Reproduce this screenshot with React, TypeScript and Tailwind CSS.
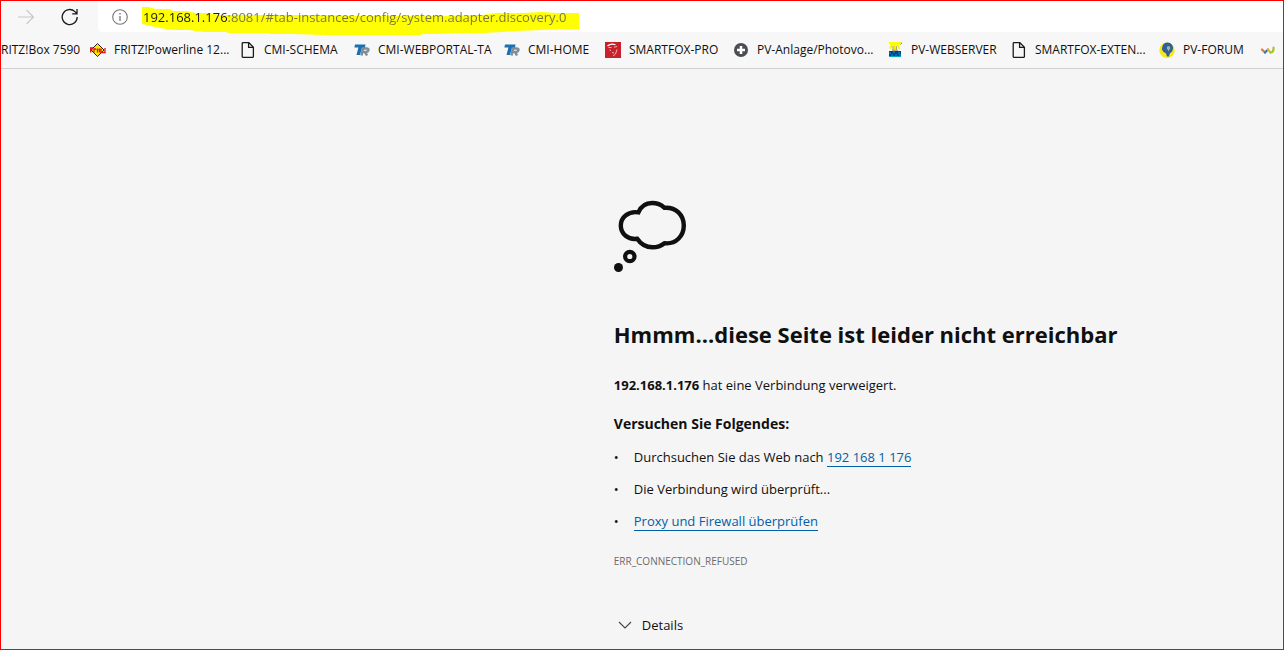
import type { ReactNode } from 'react';

function FritzIcon() {
  return (
    <svg width="16" height="16" viewBox="0 0 16 16">
      <path d="M7.500 1.500 14 8 7.500 14.500 1 8Z" fill="#ffe600" stroke="#222" strokeWidth="1" />
      <path d="M0 6h3M.700 6v4.500M0 8h2.500M4 10.500V7h2M7.500 6.500v4M6.500 7.500h2M9.500 6.500v4M11 6.500v4h1.500M15 6v4.500h-2.500" fill="none" stroke="#d8141c" strokeWidth="1.300" />
    </svg>
  );
}

function PageIcon() {
  return (
    <svg width="16" height="16" viewBox="0 0 16 16" fill="none" stroke="#1b1b1b" strokeWidth="1.300">
      <path d="M3.200.600h5.600l4.600 4.600v9.200q0 1-1 1H3.200q-1 0-1-1V1.600q0-1 1-1ZM8.600.600v4.800h4.800" />
    </svg>
  );
}

function TrIcon() {
  return (
    <svg width="16" height="16" viewBox="0 0 16 16">
      <path d="M7.500 13.500 9 6.500h3.500q2.300 0 1.900 1.700t-2.400 1.800H8.500M11 10l2 3.500" fill="none" stroke="#7f8d99" strokeWidth="2.500" />
      <path d="M1 2.500h10.500L11 5.500H8L6 13H2.500l1.900-7.500H.400Z" fill="#1b6fb5" />
    </svg>
  );
}

function FoxIcon() {
  return (
    <svg width="16" height="16" viewBox="0 0 16 16" fill="none">
      <path d="M0 0h16v16H0Z" fill="#c9202b" />
      <path d="M2.500 4Q6 .800 10.500 2.800" stroke="#fff" strokeWidth="1.200" />
      <path d="M3.500 5.500h3M9 5.200l3-.700M4.500 8l1.500.500M12 7.500 10.500 12 8 14M7 10.500l2 .500" stroke="#efb3b3" strokeWidth="1" />
    </svg>
  );
}

function PlusIcon() {
  return (
    <svg width="16" height="16" viewBox="0 0 16 16">
      <circle cx="8" cy="8" r="7" fill="#4a4e52" />
      <path d="M8 4v8M4 8h8" stroke="#fff" strokeWidth="2.600" />
    </svg>
  );
}

function SolarIcon() {
  return (
    <svg width="16" height="16" viewBox="0 0 16 16" fill="none">
      <path d="M1 0h12.500L11 3.500H4Z" fill="#ffff00" />
      <path d="M5 3 3 6.500M7.500 3v5.500M10.500 3l2 4M12.500 2l2.500-1.800" stroke="#f4ef00" strokeWidth="1.600" />
      <path d="M6 4v4M9.300 4v4M5 8.300h6M13.500 2.500 15 1" stroke="#77771a" strokeWidth=".700" />
      <path d="M2 9h12v6H2Z" fill="#063d94" />
      <path d="M2 11h2M6 10h2M11 11h2M4 13h2M8 13h2M12 13h2M2 14.500h12" stroke="#00a8b8" strokeWidth="1" />
    </svg>
  );
}

function ForumIcon() {
  return (
    <svg width="16" height="16" viewBox="0 0 16 16">
      <circle cx="8" cy="8.200" r="7.700" fill="#f6ea12" />
      <path d="M8.500.600a5.700 5.700 0 0 1 4.800 8.700L10.800 11.500l-.800 3H8L7 11.500 4 9.500A5.700 5.700 0 0 1 8.500.600Z" fill="#315f9c" />
      <path d="M9.500 4a2 2 0 0 1 .800 3.700l-.800 1.800-.800-1.800A2 2 0 0 1 9.500 4Z" fill="#9bb8a3" />
    </svg>
  );
}

function WaveIcon() {
  return (
    <svg width="16" height="16" viewBox="0 0 16 16" fill="none" strokeWidth="2.200" strokeLinecap="round">
      <path d="m2 7.500 3 3" stroke="#e8792b" />
      <path d="M5 10.500 8 7.500" stroke="#2b76b5" />
      <path d="m8 7.500 2.500 3" stroke="#efb51d" />
      <path d="M10.500 10.500q3.500-.500 3-5" stroke="#a6c52b" />
    </svg>
  );
}

type Bookmark = { label: string; icon: ReactNode; width: string };

const bookmarks: Bookmark[] = [
  { label: 'FRITZ!Powerline 12...', icon: <FritzIcon />, width: 'w-[150px]' },
  { label: 'CMI-SCHEMA', icon: <PageIcon />, width: 'w-[114px]' },
  { label: 'CMI-WEBPORTAL-TA', icon: <TrIcon />, width: 'w-[150px]' },
  { label: 'CMI-HOME', icon: <TrIcon />, width: 'w-[101px]' },
  { label: 'SMARTFOX-PRO', icon: <FoxIcon />, width: 'w-[128px]' },
  { label: 'PV-Anlage/Photovo...', icon: <PlusIcon />, width: 'w-[154px]' },
  { label: 'PV-WEBSERVER', icon: <SolarIcon />, width: 'w-[124px]' },
  { label: 'SMARTFOX-EXTEN...', icon: <PageIcon />, width: 'w-[148px]' },
  { label: 'PV-FORUM', icon: <ForumIcon />, width: 'w-[101px]' },
];

function AddressBar() {
  return (
    <header className="flex h-[31px] items-stretch">
      <button type="button" aria-label="Vorwärts" disabled className="flex w-[50px] items-center justify-center">
        <svg width="18" height="16" viewBox="0 0 18 16" fill="none" stroke="#c8c8c8" strokeWidth="1.100">
          <path d="M1 8h15.500M9.500 1l7 7-7 7" />
        </svg>
      </button>
      <button type="button" aria-label="Aktualisieren" className="flex w-[38px] items-center justify-center">
        <svg width="18" height="18" viewBox="0 0 18 18" fill="none" stroke="#1b1b1b" strokeWidth="1.300">
          <path d="M16.200 9a7.500 7.500 0 1 1-2.300-5.400L15.800 5.500M16 1v4.800h-4.800" />
        </svg>
      </button>
      <div className="ml-[9px] flex flex-1 items-center rounded-bl bg-white pl-3.5">
        <svg width="16" height="16" viewBox="0 0 16 16" fill="none" stroke="#767676" strokeWidth="1.100" className="shrink-0">
          <circle cx="8" cy="8" r="7.300" />
          <path d="M8 7v5M8 4v1.400" strokeWidth="1.300" />
        </svg>
        <div className="relative ml-[15px] h-full flex-1">
          <svg width="440" height="34" viewBox="0 0 440 34" className="absolute top-0 left-0 overflow-visible">
            <path
              d="M-1 6H6L12 8H26L30 10H44L52 12H66L76 14H180L210 15H300L340 14 352 12H380L400 11 412 12H436V28H417L400 29 374 30 360 31 340 32H318L290 33H280L278 34H181L150 33H126V32H84V31H60L46 29H34L22 28 12 26 8 25 4 24-1 23Z"
              fill="#ffff00"
            />
          </svg>
          <input
            type="text"
            aria-label="Adresse"
            defaultValue="192.168.1.176:8081/#tab-instances/config/system.adapter.discovery.0"
            className="relative block h-full w-full bg-[linear-gradient(to_right,#1b1b1b_85px,#77773c_85px)] bg-clip-text font-['Open_Sans','Noto_Sans',sans-serif] text-[13px] text-transparent outline-none"
          />
        </div>
      </div>
    </header>
  );
}

function BookmarksBar() {
  return (
    <nav aria-label="Favoriten" className="flex h-[37px] items-center border-b border-[#d0d0d0] text-[12px] whitespace-nowrap">
      <a href="#fritzbox" className="w-[89px] shrink-0">
        RITZ!Box 7590
      </a>
      <div className="flex min-w-0 flex-1 overflow-hidden">
        {bookmarks.map((b) => (
          <a key={b.label} href="#favorit" className={`flex shrink-0 items-center gap-2 ${b.width}`}>
            <span className="shrink-0">{b.icon}</span>
            <span>{b.label}</span>
          </a>
        ))}
        <a href="#mehr" aria-label="Weitere Favoriten" className="flex items-center">
          <WaveIcon />
        </a>
      </div>
    </nav>
  );
}

function ThoughtCloud() {
  return (
    <svg width="74" height="74" viewBox="0 0 74 74" fill="none" stroke="#101010">
      <path
        d="M24.400 12.400C14.500 10.800 6.800 17.200 6.800 25.600C6.800 34 14 40 23.200 38.800C27 44.500 32.500 47.300 38.500 47.300C43 47.300 47 46 50.500 43.200C62 44.500 69.800 36 69.800 25.600C69.800 15 62 7 50.500 7.800C47 4.500 43 3 38 3C32 3 27 6.200 24.400 12.400Z"
        strokeWidth="4.400"
      />
      <circle cx="15.800" cy="56.500" r="4.700" strokeWidth="4.200" />
      <circle cx="4.500" cy="67.500" r="4.500" fill="#101010" stroke="none" />
    </svg>
  );
}

const linkStyle = 'border-b border-[#0061a8] text-[#0061a8]';

export default function App() {
  return (
    <div className="flex min-h-screen flex-col border border-[#ff0000] bg-[#f7f7f7] font-['Open_Sans','Noto_Sans',sans-serif] text-[#101010]">
      <AddressBar />
      <BookmarksBar />
      <main className="flex-1 bg-[#f5f5f5] pt-[131px] pl-[47.8%] text-[13px] leading-5">
        <ThoughtCloud />
        <h1 className="mt-11 text-[22px] leading-8 font-bold whitespace-nowrap">Hmmm...diese Seite ist leider nicht erreichbar</h1>
        <p className="mt-[25px]">
          <strong className="font-bold">192.168.1.176</strong> hat eine Verbindung verweigert.
        </p>
        <h2 className="mt-[19px] text-[14px] leading-5 font-bold">Versuchen Sie Folgendes:</h2>
        <ul className="mt-[13px] flex flex-col gap-3">
          {[
            <>
              Durchsuchen Sie das Web nach{' '}
              <a href="#suche" className={linkStyle}>
                192 168 1 176
              </a>
            </>,
            <>Die Verbindung wird überprüft...</>,
            <a href="#proxy" className={linkStyle}>
              Proxy und Firewall überprüfen
            </a>,
          ].map((item, i) => (
            <li key={i} className="flex">
              <span aria-hidden="true" className="w-5">
                •
              </span>
              <span>{item}</span>
            </li>
          ))}
        </ul>
        <p className="mt-5 text-[10px] text-[#6b6b6b]">ERR_CONNECTION_REFUSED</p>
        <button type="button" className="mt-11 flex items-center gap-[10px] pl-1">
          <svg width="14" height="8" viewBox="0 0 14 8" fill="none" stroke="#444" strokeWidth="1.100">
            <path d="m1 1 6 6 6-6" />
          </svg>
          Details
        </button>
      </main>
    </div>
  );
}
